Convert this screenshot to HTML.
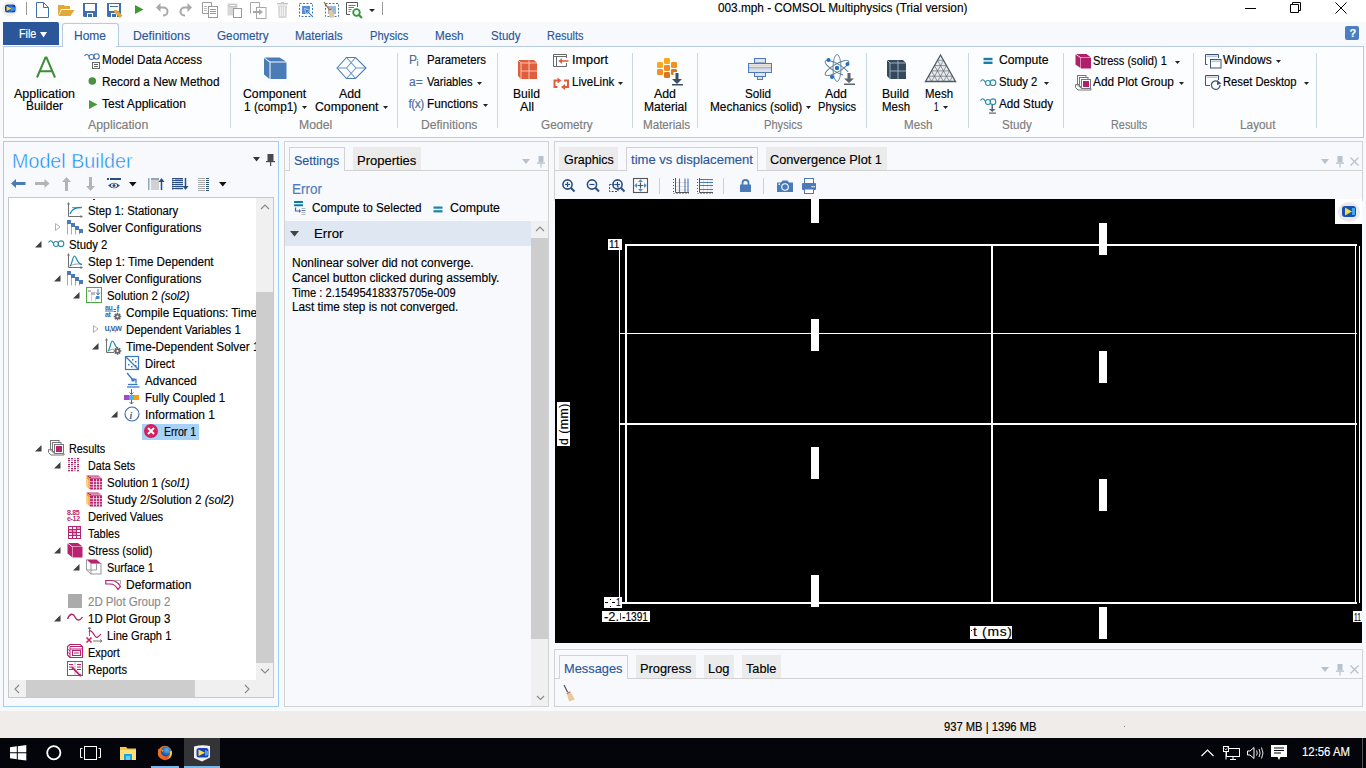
<!DOCTYPE html>
<html><head><meta charset="utf-8"><title>COMSOL</title>
<style>
html,body{margin:0;padding:0;}
body{width:1366px;height:768px;overflow:hidden;position:relative;background:#f8f9fc;font-family:"Liberation Sans",sans-serif;}
.t{position:absolute;white-space:nowrap;line-height:1;font-family:"Liberation Sans",sans-serif;-webkit-text-stroke-width:0.15px;}
svg{overflow:visible}
</style></head><body>
<div style="position:absolute;left:0px;top:0px;width:1366px;height:22px;background:#fff"></div>
<div class="t" style="left:718.00px;top:1.84px;font-size:12px;color:#000;transform:scaleX(0.9824);transform-origin:0 0;">003.mph - COMSOL Multiphysics (Trial version)</div>
<div style="position:absolute;left:0px;top:22px;width:1363px;height:24px;background:#f8f9fd"></div>
<div style="position:absolute;left:3px;top:22px;width:56px;height:23px;background:#2b579a;border-top-right-radius:2px"></div>
<div class="t" style="left:18.70px;top:28.04px;font-size:12px;color:#fff;transform:scaleX(0.8954);transform-origin:0 0;">File</div>
<svg style="position:absolute;left:40px;top:31.5px;" width="7" height="5.5" viewBox="0 0 7 5.5"><path d="M0 0H7L3.5 5.5Z" fill="#fff"/></svg>
<div style="position:absolute;left:62px;top:23px;width:55px;height:24px;background:#fcfdfe;border:1px solid #b9cbe0;border-bottom:none;border-radius:3px 3px 0 0"></div>
<div class="t" style="left:73.60px;top:29.54px;font-size:12px;color:#2b579a;transform:scaleX(0.9988);transform-origin:0 0;">Home</div>
<div class="t" style="left:133.00px;top:29.54px;font-size:12px;color:#2b579a;transform:scaleX(1.0171);transform-origin:0 0;">Definitions</div>
<div class="t" style="left:217.00px;top:29.54px;font-size:12px;color:#2b579a;transform:scaleX(0.9776);transform-origin:0 0;">Geometry</div>
<div class="t" style="left:295.00px;top:29.54px;font-size:12px;color:#2b579a;transform:scaleX(0.9782);transform-origin:0 0;">Materials</div>
<div class="t" style="left:369.50px;top:29.54px;font-size:12px;color:#2b579a;transform:scaleX(0.9265);transform-origin:0 0;">Physics</div>
<div class="t" style="left:435.00px;top:29.54px;font-size:12px;color:#2b579a;transform:scaleX(0.9714);transform-origin:0 0;">Mesh</div>
<div class="t" style="left:491.00px;top:29.54px;font-size:12px;color:#2b579a;transform:scaleX(0.9622);transform-origin:0 0;">Study</div>
<div class="t" style="left:547.00px;top:29.54px;font-size:12px;color:#2b579a;transform:scaleX(0.9120);transform-origin:0 0;">Results</div>
<div style="position:absolute;left:1345px;top:26px;width:14px;height:14px;background:#4a7fc0;border-radius:2px"></div>
<div class="t" style="left:1349.50px;top:27.87px;font-size:11px;color:#fff;font-weight:bold">?</div>
<div style="position:absolute;left:3px;top:46px;width:1359px;height:90px;background:#fcfdfe;border:1px solid #b9cbe0"></div>
<div style="position:absolute;left:63px;top:46px;width:53px;height:1px;background:#fcfdfe"></div>
<div style="position:absolute;left:230px;top:53px;width:1px;height:75px;background:#c9d6e4"></div>
<div style="position:absolute;left:397px;top:53px;width:1px;height:75px;background:#c9d6e4"></div>
<div style="position:absolute;left:497px;top:53px;width:1px;height:75px;background:#c9d6e4"></div>
<div style="position:absolute;left:632px;top:53px;width:1px;height:75px;background:#c9d6e4"></div>
<div style="position:absolute;left:697px;top:53px;width:1px;height:75px;background:#c9d6e4"></div>
<div style="position:absolute;left:866px;top:53px;width:1px;height:75px;background:#c9d6e4"></div>
<div style="position:absolute;left:968px;top:53px;width:1px;height:75px;background:#c9d6e4"></div>
<div style="position:absolute;left:1063px;top:53px;width:1px;height:75px;background:#c9d6e4"></div>
<div style="position:absolute;left:1193px;top:53px;width:1px;height:75px;background:#c9d6e4"></div>
<div style="position:absolute;left:1316px;top:53px;width:1px;height:75px;background:#c9d6e4"></div>
<div class="t" style="left:88.20px;top:118.54px;font-size:12px;color:#7c7c7c;transform:scaleX(1.0276);transform-origin:0 0;">Application</div>
<div class="t" style="left:298.50px;top:118.54px;font-size:12px;color:#7c7c7c;transform:scaleX(1.0153);transform-origin:0 0;">Model</div>
<div class="t" style="left:421.40px;top:118.54px;font-size:12px;color:#7c7c7c;transform:scaleX(1.0064);transform-origin:0 0;">Definitions</div>
<div class="t" style="left:541.20px;top:118.54px;font-size:12px;color:#7c7c7c;transform:scaleX(0.9814);transform-origin:0 0;">Geometry</div>
<div class="t" style="left:642.70px;top:118.54px;font-size:12px;color:#7c7c7c;transform:scaleX(0.9679);transform-origin:0 0;">Materials</div>
<div class="t" style="left:764.40px;top:118.54px;font-size:12px;color:#7c7c7c;transform:scaleX(0.9265);transform-origin:0 0;">Physics</div>
<div class="t" style="left:904.00px;top:118.54px;font-size:12px;color:#7c7c7c;transform:scaleX(0.9680);transform-origin:0 0;">Mesh</div>
<div class="t" style="left:1002.00px;top:118.54px;font-size:12px;color:#7c7c7c;transform:scaleX(0.9687);transform-origin:0 0;">Study</div>
<div class="t" style="left:1111.20px;top:118.54px;font-size:12px;color:#7c7c7c;transform:scaleX(0.9070);transform-origin:0 0;">Results</div>
<div class="t" style="left:1239.50px;top:118.54px;font-size:12px;color:#7c7c7c;transform:scaleX(0.9845);transform-origin:0 0;">Layout</div>
<div class="t" style="left:102.00px;top:53.74px;font-size:12px;color:#000;transform:scaleX(0.9735);transform-origin:0 0;">Model Data Access</div>
<div class="t" style="left:102.00px;top:75.74px;font-size:12px;color:#000;transform:scaleX(0.9841);transform-origin:0 0;">Record a New Method</div>
<div class="t" style="left:102.00px;top:97.74px;font-size:12px;color:#000;transform:scaleX(1.0072);transform-origin:0 0;">Test Application</div>
<div class="t" style="left:14.00px;top:87.64px;font-size:12px;color:#000;transform:scaleX(1.0395);transform-origin:0 0;">Application</div>
<div class="t" style="left:26.00px;top:100.34px;font-size:12px;color:#000;transform:scaleX(0.9898);transform-origin:0 0;">Builder</div>
<div class="t" style="left:242.50px;top:88.04px;font-size:12px;color:#000;transform:scaleX(1.0187);transform-origin:0 0;">Component</div>
<div class="t" style="left:244.20px;top:100.74px;font-size:12px;color:#000;transform:scaleX(0.9870);transform-origin:0 0;">1 (comp1)</div>
<svg style="position:absolute;left:302.0px;top:105.5px;" width="5" height="3" viewBox="0 0 5 3"><path d="M0 0H5L2.5 3Z" fill="#222"/></svg>
<div class="t" style="left:339.00px;top:88.04px;font-size:12px;color:#000;transform:scaleX(1.0300);transform-origin:0 0;">Add</div>
<div class="t" style="left:315.30px;top:100.74px;font-size:12px;color:#000;transform:scaleX(1.0235);transform-origin:0 0;">Component</div>
<svg style="position:absolute;left:382.5px;top:105.5px;" width="5" height="3" viewBox="0 0 5 3"><path d="M0 0H5L2.5 3Z" fill="#222"/></svg>
<div class="t" style="left:427.40px;top:54.04px;font-size:12px;color:#000;transform:scaleX(0.9510);transform-origin:0 0;">Parameters</div>
<div class="t" style="left:427.40px;top:76.04px;font-size:12px;color:#000;transform:scaleX(0.9259);transform-origin:0 0;">Variables</div>
<svg style="position:absolute;left:476.5px;top:81.5px;" width="5" height="3" viewBox="0 0 5 3"><path d="M0 0H5L2.5 3Z" fill="#222"/></svg>
<div class="t" style="left:427.40px;top:98.04px;font-size:12px;color:#000;transform:scaleX(0.9804);transform-origin:0 0;">Functions</div>
<svg style="position:absolute;left:482.5px;top:103.5px;" width="5" height="3" viewBox="0 0 5 3"><path d="M0 0H5L2.5 3Z" fill="#222"/></svg>
<div class="t" style="left:513.00px;top:88.04px;font-size:12px;color:#000;transform:scaleX(1.0112);transform-origin:0 0;">Build</div>
<div class="t" style="left:520.00px;top:100.74px;font-size:12px;color:#000;transform:scaleX(1.0511);transform-origin:0 0;">All</div>
<div class="t" style="left:571.50px;top:54.04px;font-size:12px;color:#000;transform:scaleX(1.0582);transform-origin:0 0;">Import</div>
<div class="t" style="left:571.60px;top:76.04px;font-size:12px;color:#000;transform:scaleX(0.9615);transform-origin:0 0;">LiveLink</div>
<svg style="position:absolute;left:617.5px;top:81.5px;" width="5" height="3" viewBox="0 0 5 3"><path d="M0 0H5L2.5 3Z" fill="#222"/></svg>
<div class="t" style="left:654.00px;top:88.04px;font-size:12px;color:#000;transform:scaleX(1.0300);transform-origin:0 0;">Add</div>
<div class="t" style="left:644.00px;top:100.74px;font-size:12px;color:#000;transform:scaleX(1.0080);transform-origin:0 0;">Material</div>
<div class="t" style="left:745.00px;top:88.04px;font-size:12px;color:#000;transform:scaleX(0.9738);transform-origin:0 0;">Solid</div>
<div class="t" style="left:709.50px;top:100.74px;font-size:12px;color:#000;transform:scaleX(0.9876);transform-origin:0 0;">Mechanics (solid)</div>
<svg style="position:absolute;left:806.0px;top:105.5px;" width="5" height="3" viewBox="0 0 5 3"><path d="M0 0H5L2.5 3Z" fill="#222"/></svg>
<div class="t" style="left:825.00px;top:88.04px;font-size:12px;color:#000;transform:scaleX(1.0300);transform-origin:0 0;">Add</div>
<div class="t" style="left:817.50px;top:100.74px;font-size:12px;color:#000;transform:scaleX(0.9216);transform-origin:0 0;">Physics</div>
<div class="t" style="left:882.00px;top:88.04px;font-size:12px;color:#000;transform:scaleX(1.0112);transform-origin:0 0;">Build</div>
<div class="t" style="left:882.00px;top:100.74px;font-size:12px;color:#000;transform:scaleX(0.9543);transform-origin:0 0;">Mesh</div>
<div class="t" style="left:925.00px;top:88.04px;font-size:12px;color:#000;transform:scaleX(0.9543);transform-origin:0 0;">Mesh</div>
<div class="t" style="left:933.80px;top:100.74px;font-size:12px;color:#000;transform:scaleX(0.6757);transform-origin:0 0;">1</div>
<svg style="position:absolute;left:942.5px;top:105.5px;" width="5" height="3" viewBox="0 0 5 3"><path d="M0 0H5L2.5 3Z" fill="#222"/></svg>
<div class="t" style="left:998.50px;top:54.04px;font-size:12px;color:#000;transform:scaleX(1.0160);transform-origin:0 0;">Compute</div>
<div class="t" style="left:998.50px;top:76.04px;font-size:12px;color:#000;transform:scaleX(0.9415);transform-origin:0 0;">Study 2</div>
<svg style="position:absolute;left:1043.5px;top:81.5px;" width="5" height="3" viewBox="0 0 5 3"><path d="M0 0H5L2.5 3Z" fill="#222"/></svg>
<div class="t" style="left:998.50px;top:98.04px;font-size:12px;color:#000;transform:scaleX(0.9769);transform-origin:0 0;">Add Study</div>
<div class="t" style="left:1093.20px;top:55.04px;font-size:12px;color:#000;transform:scaleX(0.9220);transform-origin:0 0;">Stress (solid) 1</div>
<svg style="position:absolute;left:1174.5px;top:60.5px;" width="5" height="3" viewBox="0 0 5 3"><path d="M0 0H5L2.5 3Z" fill="#222"/></svg>
<div class="t" style="left:1093.20px;top:76.04px;font-size:12px;color:#000;transform:scaleX(0.9844);transform-origin:0 0;">Add Plot Group</div>
<svg style="position:absolute;left:1179.0px;top:81.5px;" width="5" height="3" viewBox="0 0 5 3"><path d="M0 0H5L2.5 3Z" fill="#222"/></svg>
<div class="t" style="left:1223.30px;top:54.04px;font-size:12px;color:#000;transform:scaleX(1.0008);transform-origin:0 0;">Windows</div>
<svg style="position:absolute;left:1276.0px;top:59.5px;" width="5" height="3" viewBox="0 0 5 3"><path d="M0 0H5L2.5 3Z" fill="#222"/></svg>
<div class="t" style="left:1223.30px;top:76.34px;font-size:12px;color:#000;transform:scaleX(0.9350);transform-origin:0 0;">Reset Desktop</div>
<svg style="position:absolute;left:1304.0px;top:81.5px;" width="5" height="3" viewBox="0 0 5 3"><path d="M0 0H5L2.5 3Z" fill="#222"/></svg>
<div style="position:absolute;left:3px;top:141px;width:274px;height:564px;border:1px solid #9fd0f5"></div>
<div class="t" style="left:12.30px;top:150.37px;font-size:21px;color:#1089ec;transform:scaleX(0.9384);transform-origin:0 0;-webkit-text-stroke:0.5px #f8f9fc;">Model Builder</div>
<div style="position:absolute;left:8px;top:197px;width:264px;height:499px;background:#fff;border:1px solid #c8c8c8"></div>
<div style="position:absolute;left:256px;top:198px;width:17px;height:499px;background:#f0f0f0"></div>
<div style="position:absolute;left:256px;top:292px;width:17px;height:371px;background:#cdcdcd"></div>
<div style="position:absolute;left:9px;top:680px;width:247px;height:17px;background:#f0f0f0"></div>
<div style="position:absolute;left:26px;top:680px;width:169px;height:17px;background:#cdcdcd"></div>
<div style="position:absolute;left:9px;top:198px;width:247px;height:482px;overflow:hidden">
<div style="position:absolute;left:-9px;top:-198px;width:1366px;height:768px">
<div class="t" style="left:87.50px;top:204.54px;font-size:12px;color:#000;transform:scaleX(0.9465);transform-origin:0 0;">Step 1: Stationary</div>
<svg style="position:absolute;left:67px;top:202px;" width="16" height="16" viewBox="0 0 16 16"><g stroke="#707070" fill="none" stroke-width="1"><path d="M1.5 1V14.5H15"/></g><path d="M1.5 0L3 2.5H0Z M16 14.5L13.5 13V16Z" fill="#707070"/><path d="M5 5.5H15" stroke="#999"/><path d="M3 12C5 7 8 5.5 14.5 5.5" fill="none" stroke="#1a8ab0" stroke-width="1.3"/></svg>
<div class="t" style="left:87.50px;top:221.54px;font-size:12px;color:#000;transform:scaleX(0.9894);transform-origin:0 0;">Solver Configurations</div>
<svg style="position:absolute;left:55.0px;top:223.0px;" width="6" height="8" viewBox="0 0 6 8"><path d="M0.5 0.5L5 4L0.5 7.5Z" fill="none" stroke="#b0b0b0"/></svg>
<svg style="position:absolute;left:67px;top:219px;" width="16" height="16" viewBox="0 0 16 16"><rect x="0" y="1" width="4" height="4" fill="#4a7ab8"/><path d="M0.5 5V15.5" stroke="#aaa"/><rect x="4" y="4" width="4" height="4" fill="#4a7ab8"/><path d="M4.5 8V15.5" stroke="#aaa"/><rect x="8" y="7" width="4" height="4" fill="#4a7ab8"/><path d="M8.5 11V15.5" stroke="#aaa"/><rect x="12" y="10" width="4" height="4" fill="#4a7ab8"/><path d="M12.5 14V15.5" stroke="#aaa"/></svg>
<div class="t" style="left:68.50px;top:238.54px;font-size:12px;color:#000;transform:scaleX(0.9440);transform-origin:0 0;">Study 2</div>
<svg style="position:absolute;left:35.0px;top:241.0px;" width="7" height="7" viewBox="0 0 7 7"><path d="M6.5 0V6.5H0Z" fill="#404040"/></svg>
<svg style="position:absolute;left:48px;top:236px;" width="16" height="16" viewBox="0 0 16 16"><g fill="none" stroke="#2a8ca0" stroke-width="1.1"><path d="M0.5 6.5C2 4 3.5 4 5.5 7.5"/><circle cx="8" cy="8" r="2.5"/><circle cx="13" cy="7.7" r="2.8"/></g></svg>
<div class="t" style="left:87.50px;top:255.54px;font-size:12px;color:#000;transform:scaleX(0.9705);transform-origin:0 0;">Step 1: Time Dependent</div>
<svg style="position:absolute;left:67px;top:253px;" width="16" height="16" viewBox="0 0 16 16"><g stroke="#707070" fill="none" stroke-width="1"><path d="M1.5 1V14.5H15"/></g><path d="M1.5 0L3 2.5H0Z M16 14.5L13.5 13V16Z" fill="#707070"/><path d="M3 13C7 11 8 11 15 11" fill="none" stroke="#999"/><path d="M2.5 13C5 13 5.5 3 7.5 3C9.5 3 10 11.5 15 11.5" fill="none" stroke="#1a8ab0" stroke-width="1.2"/></svg>
<div class="t" style="left:87.50px;top:272.54px;font-size:12px;color:#000;transform:scaleX(0.9894);transform-origin:0 0;">Solver Configurations</div>
<svg style="position:absolute;left:54.0px;top:275.0px;" width="7" height="7" viewBox="0 0 7 7"><path d="M6.5 0V6.5H0Z" fill="#404040"/></svg>
<svg style="position:absolute;left:67px;top:270px;" width="16" height="16" viewBox="0 0 16 16"><rect x="0" y="1" width="4" height="4" fill="#4a7ab8"/><path d="M0.5 5V15.5" stroke="#aaa"/><rect x="4" y="4" width="4" height="4" fill="#4a7ab8"/><path d="M4.5 8V15.5" stroke="#aaa"/><rect x="8" y="7" width="4" height="4" fill="#4a7ab8"/><path d="M8.5 11V15.5" stroke="#aaa"/><rect x="12" y="10" width="4" height="4" fill="#4a7ab8"/><path d="M12.5 14V15.5" stroke="#aaa"/></svg>
<div class="t" style="left:106.50px;top:289.54px;font-size:12px;color:#000;transform:scaleX(0.9516);transform-origin:0 0;">Solution 2 <i>(sol2)</i></div>
<svg style="position:absolute;left:73.0px;top:292.0px;" width="7" height="7" viewBox="0 0 7 7"><path d="M6.5 0V6.5H0Z" fill="#404040"/></svg>
<svg style="position:absolute;left:86px;top:287px;" width="16" height="16" viewBox="0 0 16 16"><rect x="0.5" y="0.5" width="15" height="15" fill="#fff" stroke="#4aaa40"/><rect x="2" y="3" width="3" height="2" fill="#bbb"/><rect x="5" y="5" width="4" height="3" fill="#bbb"/><path d="M5.5 8V14M9.5 10V14" stroke="#ccc"/><rect x="10" y="9" width="3.5" height="3" fill="#4a8ac8"/><path d="M12 2V7" stroke="#3a7ac0"/><path d="M10 5.5L12 8L14 5.5" fill="none" stroke="#3a7ac0"/></svg>
<div class="t" style="left:125.50px;top:306.54px;font-size:12px;color:#000;transform:scaleX(0.9822);transform-origin:0 0;">Compile Equations: Time-Dependent</div>
<svg style="position:absolute;left:105px;top:304px;" width="16" height="16" viewBox="0 0 16 16"><text x="0" y="5.5" font-size="7" font-weight="bold" fill="#3a6aa8" font-family="Liberation Sans" letter-spacing="-0.3">au</text><path d="M0 7H8" stroke="#3a6aa8"/><text x="0" y="13" font-size="7" font-weight="bold" fill="#3a6aa8" font-family="Liberation Sans" letter-spacing="-0.3">at</text><path d="M8.5 5.5H11M8.5 7.5H11" stroke="#3a6aa8"/><text x="11.5" y="7.5" font-size="8.5" font-weight="bold" fill="#3a6aa8" font-family="Liberation Sans">f</text><circle cx="12.5" cy="12.5" r="2.6" fill="#666"/><circle cx="12.5" cy="12.5" r="1.04" fill="#fff"/><rect x="11.7" y="8.700000000000001" width="1.6" height="2" fill="#666" transform="rotate(0 12.5 12.5)"/><rect x="11.7" y="8.700000000000001" width="1.6" height="2" fill="#666" transform="rotate(45 12.5 12.5)"/><rect x="11.7" y="8.700000000000001" width="1.6" height="2" fill="#666" transform="rotate(90 12.5 12.5)"/><rect x="11.7" y="8.700000000000001" width="1.6" height="2" fill="#666" transform="rotate(135 12.5 12.5)"/><rect x="11.7" y="8.700000000000001" width="1.6" height="2" fill="#666" transform="rotate(180 12.5 12.5)"/><rect x="11.7" y="8.700000000000001" width="1.6" height="2" fill="#666" transform="rotate(225 12.5 12.5)"/><rect x="11.7" y="8.700000000000001" width="1.6" height="2" fill="#666" transform="rotate(270 12.5 12.5)"/><rect x="11.7" y="8.700000000000001" width="1.6" height="2" fill="#666" transform="rotate(315 12.5 12.5)"/></svg>
<div class="t" style="left:125.50px;top:323.54px;font-size:12px;color:#000;transform:scaleX(0.9464);transform-origin:0 0;">Dependent Variables 1</div>
<svg style="position:absolute;left:93.0px;top:325.0px;" width="6" height="8" viewBox="0 0 6 8"><path d="M0.5 0.5L5 4L0.5 7.5Z" fill="none" stroke="#b0b0b0"/></svg>
<svg style="position:absolute;left:105px;top:321px;" width="16" height="16" viewBox="0 0 16 16"><text x="-0.5" y="10" font-size="8.5" font-weight="bold" fill="#3a6aa8" font-family="Liberation Sans" letter-spacing="-0.8">u,v,w</text></svg>
<div class="t" style="left:125.50px;top:340.54px;font-size:12px;color:#000;transform:scaleX(0.9794);transform-origin:0 0;">Time-Dependent Solver 1</div>
<svg style="position:absolute;left:92.0px;top:343.0px;" width="7" height="7" viewBox="0 0 7 7"><path d="M6.5 0V6.5H0Z" fill="#404040"/></svg>
<svg style="position:absolute;left:105px;top:338px;" width="16" height="16" viewBox="0 0 16 16"><g stroke="#707070" fill="none" stroke-width="1"><path d="M1.5 1V14.5H15"/></g><path d="M1.5 0L3 2.5H0Z M16 14.5L13.5 13V16Z" fill="#707070"/><path d="M3 13C7 11 8 11 15 11" fill="none" stroke="#999"/><path d="M2.5 13C5 13 5.5 3 7.5 3C9.5 3 10 11.5 15 11.5" fill="none" stroke="#1a8ab0" stroke-width="1.2"/><rect x="9" y="10" width="7" height="7" fill="#fff"/><circle cx="12.5" cy="13" r="2.6" fill="#666"/><circle cx="12.5" cy="13" r="1.04" fill="#fff"/><rect x="11.7" y="9.200000000000001" width="1.6" height="2" fill="#666" transform="rotate(0 12.5 13)"/><rect x="11.7" y="9.200000000000001" width="1.6" height="2" fill="#666" transform="rotate(45 12.5 13)"/><rect x="11.7" y="9.200000000000001" width="1.6" height="2" fill="#666" transform="rotate(90 12.5 13)"/><rect x="11.7" y="9.200000000000001" width="1.6" height="2" fill="#666" transform="rotate(135 12.5 13)"/><rect x="11.7" y="9.200000000000001" width="1.6" height="2" fill="#666" transform="rotate(180 12.5 13)"/><rect x="11.7" y="9.200000000000001" width="1.6" height="2" fill="#666" transform="rotate(225 12.5 13)"/><rect x="11.7" y="9.200000000000001" width="1.6" height="2" fill="#666" transform="rotate(270 12.5 13)"/><rect x="11.7" y="9.200000000000001" width="1.6" height="2" fill="#666" transform="rotate(315 12.5 13)"/></svg>
<div class="t" style="left:144.50px;top:357.54px;font-size:12px;color:#000;transform:scaleX(0.9451);transform-origin:0 0;">Direct</div>
<svg style="position:absolute;left:124px;top:355px;" width="16" height="16" viewBox="0 0 16 16"><rect x="1.5" y="1.5" width="13" height="13" fill="#fff" stroke="#3a7ac0" stroke-width="1.2"/><path d="M2 2L14 14" stroke="#3a7ac0" stroke-width="1.2"/><rect x="8" y="4" width="1.5" height="1.5" fill="#3a7ac0"/><rect x="11" y="6" width="1.5" height="1.5" fill="#3a7ac0"/><rect x="4" y="9" width="1.5" height="1.5" fill="#3a7ac0"/><rect x="7" y="11" width="1.5" height="1.5" fill="#3a7ac0"/><rect x="11" y="10" width="1.5" height="1.5" fill="#3a7ac0"/></svg>
<div class="t" style="left:144.50px;top:374.54px;font-size:12px;color:#000;transform:scaleX(0.9663);transform-origin:0 0;">Advanced</div>
<svg style="position:absolute;left:124px;top:372px;" width="16" height="16" viewBox="0 0 16 16"><g fill="none" stroke="#3a7ac0" stroke-width="1.3"><path d="M3 1L9 8"/><path d="M8 7.5H12V11.5"/><path d="M4 12.5H13.5"/><path d="M3 15H15.5"/></g><rect x="7.5" y="6.5" width="3" height="3" fill="#3a7ac0"/></svg>
<div class="t" style="left:144.50px;top:391.54px;font-size:12px;color:#000;transform:scaleX(0.9604);transform-origin:0 0;">Fully Coupled 1</div>
<svg style="position:absolute;left:124px;top:389px;" width="16" height="16" viewBox="0 0 16 16"><rect x="0" y="6" width="5" height="5" fill="#a048c8"/><rect x="5" y="6" width="5" height="5" fill="#48b8e8"/><rect x="10" y="6" width="5" height="5" fill="#f8a010"/><path d="M7.5 0V5M7.5 11V15" stroke="#666"/><path d="M5.5 3.5L7.5 5.5L9.5 3.5M5.5 13L7.5 15L9.5 13" fill="none" stroke="#666"/></svg>
<div class="t" style="left:144.50px;top:408.54px;font-size:12px;color:#000;transform:scaleX(0.9997);transform-origin:0 0;">Information 1</div>
<svg style="position:absolute;left:111.0px;top:411.0px;" width="7" height="7" viewBox="0 0 7 7"><path d="M6.5 0V6.5H0Z" fill="#404040"/></svg>
<svg style="position:absolute;left:124px;top:406px;" width="16" height="16" viewBox="0 0 16 16"><circle cx="8" cy="8" r="7" fill="#fff" stroke="#3a6aa8" stroke-width="1.1"/><text x="5.5" y="12.5" font-size="10" font-style="italic" font-family="Liberation Serif" fill="#3a6aa8" font-weight="bold">i</text></svg>
<div style="position:absolute;left:142px;top:423.5px;width:57px;height:16px;background:#a6d2f7"></div>
<div class="t" style="left:163.50px;top:425.54px;font-size:12px;color:#000;transform:scaleX(0.8756);transform-origin:0 0;">Error 1</div>
<svg style="position:absolute;left:143px;top:423px;" width="16" height="16" viewBox="0 0 16 16"><circle cx="8" cy="8" r="7" fill="#d81e5b"/><path d="M5 5L11 11M11 5L5 11" stroke="#fff" stroke-width="2"/></svg>
<div class="t" style="left:68.50px;top:442.54px;font-size:12px;color:#000;transform:scaleX(0.9045);transform-origin:0 0;">Results</div>
<svg style="position:absolute;left:35.0px;top:445.0px;" width="7" height="7" viewBox="0 0 7 7"><path d="M6.5 0V6.5H0Z" fill="#404040"/></svg>
<svg style="position:absolute;left:48px;top:440px;" width="16" height="16" viewBox="0 0 16 16"><g fill="#fff" stroke="#777"><rect x="2.5" y="0.5" width="8.5" height="9"/><rect x="4.5" y="2.5" width="8.5" height="9"/><rect x="6.5" y="4.5" width="9" height="9"/><path d="M0.5 9.5V12.5L3 15H16V13.5H6.5L2.5 10Z"/></g><rect x="8" y="6" width="6" height="6" fill="#b8226e"/></svg>
<div class="t" style="left:87.50px;top:459.54px;font-size:12px;color:#000;transform:scaleX(0.8922);transform-origin:0 0;">Data Sets</div>
<svg style="position:absolute;left:54.0px;top:462.0px;" width="7" height="7" viewBox="0 0 7 7"><path d="M6.5 0V6.5H0Z" fill="#404040"/></svg>
<svg style="position:absolute;left:67px;top:457px;" width="16" height="16" viewBox="0 0 16 16"><rect x="1" y="1" width="2" height="1.3" fill="#b8226e"/><rect x="1" y="3" width="2" height="1.3" fill="#b8226e"/><rect x="1" y="5" width="2" height="1.3" fill="#aab"/><rect x="1" y="7" width="2" height="1.3" fill="#b8226e"/><rect x="1" y="9" width="2" height="1.3" fill="#b8226e"/><rect x="1" y="11" width="2" height="1.3" fill="#aab"/><rect x="1" y="13" width="2" height="1.3" fill="#b8226e"/><rect x="4" y="1" width="2" height="1.3" fill="#b8226e"/><rect x="4" y="3" width="2" height="1.3" fill="#aab"/><rect x="4" y="5" width="2" height="1.3" fill="#b8226e"/><rect x="4" y="7" width="2" height="1.3" fill="#b8226e"/><rect x="4" y="9" width="2" height="1.3" fill="#aab"/><rect x="4" y="11" width="2" height="1.3" fill="#b8226e"/><rect x="4" y="13" width="2" height="1.3" fill="#b8226e"/><rect x="7" y="1" width="2" height="1.3" fill="#aab"/><rect x="7" y="3" width="2" height="1.3" fill="#b8226e"/><rect x="7" y="5" width="2" height="1.3" fill="#b8226e"/><rect x="7" y="7" width="2" height="1.3" fill="#aab"/><rect x="7" y="9" width="2" height="1.3" fill="#b8226e"/><rect x="7" y="11" width="2" height="1.3" fill="#b8226e"/><rect x="7" y="13" width="2" height="1.3" fill="#aab"/><rect x="10" y="1" width="2" height="1.3" fill="#b8226e"/><rect x="10" y="3" width="2" height="1.3" fill="#b8226e"/><rect x="10" y="5" width="2" height="1.3" fill="#aab"/><rect x="10" y="7" width="2" height="1.3" fill="#b8226e"/><rect x="10" y="9" width="2" height="1.3" fill="#b8226e"/><rect x="10" y="11" width="2" height="1.3" fill="#aab"/><rect x="10" y="13" width="2" height="1.3" fill="#b8226e"/></svg>
<div class="t" style="left:106.50px;top:476.54px;font-size:12px;color:#000;transform:scaleX(0.9527);transform-origin:0 0;">Solution 1 <i>(sol1)</i></div>
<svg style="position:absolute;left:86px;top:474px;" width="16" height="16" viewBox="0 0 16 16"><path d="M0.5 1.5L4 4.5V15.5L0.5 12.5Z" fill="#f8a020"/><path d="M0.5 1.5H12.5L16 4.5H4Z" fill="#b8226e"/><rect x="4" y="4.5" width="12" height="11" fill="#b8226e"/><path d="M7.5 5V15.5" stroke="#fff" stroke-width="0.7"/><path d="M4 7.7H16" stroke="#fff" stroke-width="0.7"/><path d="M10.5 5V15.5" stroke="#fff" stroke-width="0.7"/><path d="M4 10.4H16" stroke="#fff" stroke-width="0.7"/><path d="M13.5 5V15.5" stroke="#fff" stroke-width="0.7"/><path d="M4 13.1H16" stroke="#fff" stroke-width="0.7"/><path d="M1.5 5V13M3 6V14" stroke="#fff" stroke-width="0.5"/><path d="M3 2.3H14M5 3.5H15" stroke="#fff" stroke-width="0.5"/></svg>
<div class="t" style="left:106.50px;top:493.54px;font-size:12px;color:#000;transform:scaleX(0.9699);transform-origin:0 0;">Study 2/Solution 2 <i>(sol2)</i></div>
<svg style="position:absolute;left:86px;top:491px;" width="16" height="16" viewBox="0 0 16 16"><path d="M0.5 1.5L4 4.5V15.5L0.5 12.5Z" fill="#f8a020"/><path d="M0.5 1.5H12.5L16 4.5H4Z" fill="#b8226e"/><rect x="4" y="4.5" width="12" height="11" fill="#b8226e"/><path d="M7.5 5V15.5" stroke="#fff" stroke-width="0.7"/><path d="M4 7.7H16" stroke="#fff" stroke-width="0.7"/><path d="M10.5 5V15.5" stroke="#fff" stroke-width="0.7"/><path d="M4 10.4H16" stroke="#fff" stroke-width="0.7"/><path d="M13.5 5V15.5" stroke="#fff" stroke-width="0.7"/><path d="M4 13.1H16" stroke="#fff" stroke-width="0.7"/><path d="M1.5 5V13M3 6V14" stroke="#fff" stroke-width="0.5"/><path d="M3 2.3H14M5 3.5H15" stroke="#fff" stroke-width="0.5"/></svg>
<div class="t" style="left:87.50px;top:510.54px;font-size:12px;color:#000;transform:scaleX(0.9346);transform-origin:0 0;">Derived Values</div>
<svg style="position:absolute;left:67px;top:508px;" width="16" height="16" viewBox="0 0 16 16"><text x="0" y="6.5" font-size="7" font-weight="bold" fill="#b8226e" font-family="Liberation Sans" letter-spacing="-0.3">8.85</text><text x="0" y="13" font-size="7" font-weight="bold" fill="#b8226e" font-family="Liberation Sans" letter-spacing="-0.3">e-12</text></svg>
<div class="t" style="left:87.50px;top:527.54px;font-size:12px;color:#000;transform:scaleX(0.9141);transform-origin:0 0;">Tables</div>
<svg style="position:absolute;left:67px;top:525px;" width="16" height="16" viewBox="0 0 16 16"><rect x="1" y="1" width="13" height="13" fill="#b8226e"/><rect x="2" y="2" width="3" height="2" fill="#fff"/><rect x="2" y="5" width="3" height="2" fill="#d8a0b8"/><rect x="2" y="8" width="3" height="2" fill="#fff"/><rect x="2" y="11" width="3" height="2" fill="#fff"/><rect x="6" y="2" width="3" height="2" fill="#fff"/><rect x="6" y="5" width="3" height="2" fill="#d8a0b8"/><rect x="6" y="8" width="3" height="2" fill="#d8a0b8"/><rect x="6" y="11" width="3" height="2" fill="#fff"/><rect x="10" y="2" width="3" height="2" fill="#d8a0b8"/><rect x="10" y="5" width="3" height="2" fill="#fff"/><rect x="10" y="8" width="3" height="2" fill="#fff"/><rect x="10" y="11" width="3" height="2" fill="#fff"/></svg>
<div class="t" style="left:87.50px;top:544.54px;font-size:12px;color:#000;transform:scaleX(0.9197);transform-origin:0 0;">Stress (solid)</div>
<svg style="position:absolute;left:54.0px;top:547.0px;" width="7" height="7" viewBox="0 0 7 7"><path d="M6.5 0V6.5H0Z" fill="#404040"/></svg>
<svg style="position:absolute;left:67px;top:542px;" width="16" height="16" viewBox="0 0 16 16"><path d="M0.5 1.5L5 5V15L0.5 11.5Z" fill="#b8226e"/><path d="M1 1H11L15.5 4.5H5.5Z" fill="#b8226e"/><rect x="5.5" y="5" width="10" height="10.5" fill="#b8226e"/></svg>
<div class="t" style="left:106.50px;top:561.54px;font-size:12px;color:#000;transform:scaleX(0.9093);transform-origin:0 0;">Surface 1</div>
<svg style="position:absolute;left:73.0px;top:564.0px;" width="7" height="7" viewBox="0 0 7 7"><path d="M6.5 0V6.5H0Z" fill="#404040"/></svg>
<svg style="position:absolute;left:86px;top:559px;" width="16" height="16" viewBox="0 0 16 16"><path d="M0.5 0.5H10.5L15 4.5H5Z" fill="#b8226e"/><g fill="none" stroke="#999"><rect x="5" y="4.5" width="10" height="10.5"/><path d="M0.5 0.5V11L5 15M0.5 11H10.5V4.5"/></g></svg>
<div class="t" style="left:125.50px;top:578.54px;font-size:12px;color:#000;transform:scaleX(1.0009);transform-origin:0 0;">Deformation</div>
<svg style="position:absolute;left:105px;top:576px;" width="16" height="16" viewBox="0 0 16 16"><rect x="6" y="4.5" width="9.5" height="3.5" fill="none" stroke="#b0b0b0"/><path d="M0.8 4.5H6.5C10 4.5 13 6.5 15.5 10.5L13 13.5C11 10 8.5 8 5.5 8H0.8Z" fill="#fff" stroke="#b8226e" stroke-width="1.2"/></svg>
<div class="t" style="left:87.50px;top:595.54px;font-size:12px;color:#8a8a8a;transform:scaleX(0.9565);transform-origin:0 0;">2D Plot Group 2</div>
<svg style="position:absolute;left:67px;top:593px;" width="16" height="16" viewBox="0 0 16 16"><rect x="1" y="1" width="14" height="14" fill="#ababab"/></svg>
<div class="t" style="left:87.50px;top:612.54px;font-size:12px;color:#000;transform:scaleX(0.9565);transform-origin:0 0;">1D Plot Group 3</div>
<svg style="position:absolute;left:54.0px;top:615.0px;" width="7" height="7" viewBox="0 0 7 7"><path d="M6.5 0V6.5H0Z" fill="#404040"/></svg>
<svg style="position:absolute;left:67px;top:610px;" width="16" height="16" viewBox="0 0 16 16"><path d="M0.5 9C3 3 6 3 8 7C10 11 13 11 15.5 7" fill="none" stroke="#b8226e" stroke-width="1.4"/></svg>
<div class="t" style="left:106.50px;top:629.54px;font-size:12px;color:#000;transform:scaleX(0.9270);transform-origin:0 0;">Line Graph 1</div>
<svg style="position:absolute;left:86px;top:627px;" width="16" height="16" viewBox="0 0 16 16"><path d="M3.5 0V9M3.5 0L2 2M3.5 0L5 2" stroke="#777" fill="none"/><path d="M7 14H16M16 14L14 12.5M16 14L14 15.5" stroke="#777" fill="none"/><path d="M3 5C5 2 7 6 9 9C11 12 13 9 15 7" fill="none" stroke="#b8226e" stroke-width="1.2"/><path d="M0.5 10.5L5.5 15.5M5.5 10.5L0.5 15.5" stroke="#d81e5b" stroke-width="1.6"/></svg>
<div class="t" style="left:87.50px;top:646.54px;font-size:12px;color:#000;transform:scaleX(0.9141);transform-origin:0 0;">Export</div>
<svg style="position:absolute;left:67px;top:644px;" width="16" height="16" viewBox="0 0 16 16"><path d="M0.5 2.5L3 0.5H13L15.5 2.5V13.5H3L0.5 11Z" fill="#fff" stroke="#b8226e" stroke-width="1.2"/><path d="M3 2.5H15.5M3 2.5V13.5M3 5H15.5" stroke="#b8226e" stroke-width="1"/><rect x="5.5" y="6.5" width="8" height="5" fill="none" stroke="#b8226e"/><path d="M7 9H12" stroke="#b8226e"/><path d="M0.5 5L3 7M0.5 8L3 10" stroke="#b8226e" stroke-width="0.8"/></svg>
<div class="t" style="left:87.50px;top:663.54px;font-size:12px;color:#000;transform:scaleX(0.9286);transform-origin:0 0;">Reports</div>
<svg style="position:absolute;left:67px;top:661px;" width="16" height="16" viewBox="0 0 16 16"><rect x="0.5" y="0.5" width="15" height="14" fill="#fff" stroke="#666"/><path d="M8 1V14" stroke="#bbb"/><path d="M2 3.5H6M2 6H5M2 8.5H6M10 3.5H14M10 6H14M10 8.5H14" stroke="#b8226e"/><path d="M5 6L14 15" stroke="#b8226e" stroke-width="2.2"/><path d="M7 6.5L13 13" stroke="#fff" stroke-width="0.6"/></svg>
</div></div>
<div style="position:absolute;left:284px;top:141px;width:264px;height:565px;background:#f8f9fc;border:1px solid #d2d2d2;box-sizing:border-box;width:265px;height:566px"></div>
<div style="position:absolute;left:285px;top:170px;width:263px;height:1px;background:#d2d2d2"></div>
<div style="position:absolute;left:289px;top:147px;width:56px;height:24px;background:#f8f9fc;border:1px solid #d2d2d2;border-bottom:none;box-sizing:border-box"></div>
<div style="position:absolute;left:353px;top:147px;width:68px;height:23px;background:#ebebeb"></div>
<div class="t" style="left:294.30px;top:154.21px;font-size:13px;color:#2b579a;transform:scaleX(0.9618);transform-origin:0 0;">Settings</div>
<div class="t" style="left:357.40px;top:154.21px;font-size:13px;color:#000;transform:scaleX(1.0020);transform-origin:0 0;">Properties</div>
<div class="t" style="left:291.70px;top:182.08px;font-size:14px;color:#4e7cb8;transform:scaleX(0.9685);transform-origin:0 0;">Error</div>
<div class="t" style="left:311.50px;top:201.64px;font-size:12px;color:#000;transform:scaleX(0.9779);transform-origin:0 0;">Compute to Selected</div>
<div class="t" style="left:450.00px;top:201.54px;font-size:12px;color:#000;transform:scaleX(1.0263);transform-origin:0 0;">Compute</div>
<div style="position:absolute;left:285px;top:221px;width:246px;height:25px;background:#dfe8f2"></div>
<svg style="position:absolute;left:290px;top:231px;" width="9" height="6" viewBox="0 0 9 6"><path d="M0 0H9L4.5 5.5Z" fill="#444"/></svg>
<div class="t" style="left:314.40px;top:227.01px;font-size:13px;color:#000;transform:scaleX(1.0187);transform-origin:0 0;">Error</div>
<div style="position:absolute;left:531px;top:221px;width:17px;height:485px;background:#f0f0f0"></div>
<div style="position:absolute;left:531px;top:238px;width:17px;height:401px;background:#cdcdcd"></div>
<div class="t" style="left:292.30px;top:256.84px;font-size:12px;color:#000;transform:scaleX(0.9973);transform-origin:0 0;">Nonlinear solver did not converge.</div>
<div class="t" style="left:292.30px;top:271.84px;font-size:12px;color:#000;transform:scaleX(1.0008);transform-origin:0 0;">Cancel button clicked during assembly.</div>
<div class="t" style="left:292.30px;top:286.84px;font-size:12px;color:#000;transform:scaleX(0.9240);transform-origin:0 0;">Time : 2.154954183375705e-009</div>
<div class="t" style="left:292.30px;top:301.34px;font-size:12px;color:#000;transform:scaleX(0.9821);transform-origin:0 0;">Last time step is not converged.</div>
<div style="position:absolute;left:554px;top:141px;width:809px;height:60px;border:1px solid #d2d2d2;border-bottom:none;box-sizing:border-box;width:809px;height:60px"></div>
<div style="position:absolute;left:555px;top:170px;width:807px;height:1px;background:#d2d2d2"></div>
<div style="position:absolute;left:559px;top:147px;width:59px;height:23px;background:#ebebeb"></div>
<div style="position:absolute;left:626px;top:147px;width:132px;height:24px;background:#f8f9fc;border:1px solid #d2d2d2;border-bottom:none;box-sizing:border-box"></div>
<div style="position:absolute;left:766px;top:147px;width:121px;height:23px;background:#ebebeb"></div>
<div class="t" style="left:563.70px;top:152.81px;font-size:13px;color:#000;transform:scaleX(0.9577);transform-origin:0 0;">Graphics</div>
<div class="t" style="left:630.70px;top:152.81px;font-size:13px;color:#2b579a;transform:scaleX(1.0045);transform-origin:0 0;">time vs displacement</div>
<div class="t" style="left:770.40px;top:152.91px;font-size:13px;color:#000;transform:scaleX(0.9798);transform-origin:0 0;">Convergence Plot 1</div>
<div style="position:absolute;left:555px;top:199px;width:807px;height:444px;background:#000"></div>
<div style="position:absolute;left:811px;top:199px;width:8px;height:24px;background:#fff"></div>
<div style="position:absolute;left:811px;top:319px;width:8px;height:32px;background:#fff"></div>
<div style="position:absolute;left:811px;top:447px;width:8px;height:32px;background:#fff"></div>
<div style="position:absolute;left:811px;top:575px;width:8px;height:32px;background:#fff"></div>
<div style="position:absolute;left:1099px;top:223px;width:8px;height:32px;background:#fff"></div>
<div style="position:absolute;left:1099px;top:351px;width:8px;height:32px;background:#fff"></div>
<div style="position:absolute;left:1099px;top:479px;width:8px;height:32px;background:#fff"></div>
<div style="position:absolute;left:1099px;top:607px;width:8px;height:32px;background:#fff"></div>
<div style="position:absolute;left:626px;top:244px;width:731px;height:2px;background:#fff"></div>
<div style="position:absolute;left:622px;top:602px;width:735px;height:2px;background:#fff"></div>
<div style="position:absolute;left:625px;top:244px;width:2px;height:360px;background:#fff"></div>
<div style="position:absolute;left:619px;top:250px;width:1px;height:352px;background:#fff"></div>
<div style="position:absolute;left:619px;top:333px;width:738px;height:1px;background:#fff"></div>
<div style="position:absolute;left:619px;top:423px;width:738px;height:2px;background:#fff"></div>
<div style="position:absolute;left:991px;top:245px;width:2px;height:358px;background:#fff"></div>
<div style="position:absolute;left:1355px;top:246px;width:1px;height:357px;background:#fff"></div>
<div style="position:absolute;left:1359px;top:246px;width:1px;height:357px;background:#fff"></div>
<div style="position:absolute;left:608px;top:239px;width:14px;height:11px;background:#fff"></div>
<div class="t" style="left:609.00px;top:239.37px;font-size:11px;color:#000;transform:scaleX(0.9091);transform-origin:0 0;font-family:"Liberation Mono";">11</div>
<div style="position:absolute;left:604px;top:597px;width:18px;height:11px;background:#fff"></div>
<div style="position:absolute;left:605px;top:602px;width:3px;height:1.3px;background:#000"></div>
<div style="position:absolute;left:612px;top:602px;width:3px;height:1.3px;background:#000"></div>
<div style="position:absolute;left:609.5px;top:598.5px;width:1.5px;height:1.3px;background:#000"></div>
<div style="position:absolute;left:609.5px;top:605.5px;width:1.5px;height:1.3px;background:#000"></div>
<div class="t" style="left:616.00px;top:597.37px;font-size:11px;color:#000;transform:scaleX(0.7576);transform-origin:0 0;font-family:"Liberation Mono";">1</div>
<div style="position:absolute;left:602px;top:611px;width:48px;height:11px;background:#fff"></div>
<div class="t" style="left:603.50px;top:610.84px;font-size:12px;color:#000;transform:scaleX(1.0730);transform-origin:0 0;">-2.</div>
<div style="position:absolute;left:620px;top:613px;width:1px;height:7px;background:#555"></div>
<div class="t" style="left:622.00px;top:610.84px;font-size:12px;color:#000;transform:scaleX(0.8464);transform-origin:0 0;">-1391</div>
<div style="position:absolute;left:970px;top:626px;width:42px;height:13px;background:#fff"></div>
<div style="position:absolute;left:971px;top:630px;width:1px;height:1px;background:#000"></div>
<div class="t" style="left:973.00px;top:626.33px;font-size:12.5px;color:#000;transform:scaleX(1.1147);transform-origin:0 0;letter-spacing:0.6px">t (ms)</div>
<div style="position:absolute;left:1010px;top:629px;width:1.2px;height:7px;background:#333"></div>
<div style="position:absolute;left:1353px;top:611px;width:9px;height:11px;background:#fff"></div>
<div class="t" style="left:1354.00px;top:611.67px;font-size:11px;color:#000;transform:scaleX(0.6061);transform-origin:0 0;font-family:"Liberation Mono";">11</div>
<div style="position:absolute;left:557px;top:402px;width:13px;height:44px;background:#fff"></div>
<div class="t" style="left:557.60px;top:444.60px;font-size:12.5px;color:#000;letter-spacing:0.5px;transform-origin:0 0;transform:rotate(-90deg) scaleX(0.9826)">d (mm)</div>
<div style="position:absolute;left:1335px;top:199px;width:27px;height:25px;background:#fff"></div>
<div style="position:absolute;left:554px;top:649px;width:809px;height:58px;border:1px solid #d2d2d2;box-sizing:border-box;width:809px;height:58px"></div>
<div style="position:absolute;left:555px;top:678px;width:807px;height:1px;background:#d2d2d2"></div>
<div style="position:absolute;left:559px;top:655px;width:69px;height:24px;background:#f8f9fc;border:1px solid #d2d2d2;border-bottom:none;box-sizing:border-box"></div>
<div style="position:absolute;left:636px;top:655px;width:60px;height:23px;background:#ebebeb"></div>
<div style="position:absolute;left:704px;top:655px;width:30px;height:23px;background:#ebebeb"></div>
<div style="position:absolute;left:742px;top:655px;width:39px;height:23px;background:#ebebeb"></div>
<div class="t" style="left:564.30px;top:662.21px;font-size:13px;color:#2b579a;transform:scaleX(0.9868);transform-origin:0 0;">Messages</div>
<div class="t" style="left:640.20px;top:662.21px;font-size:13px;color:#000;transform:scaleX(0.9865);transform-origin:0 0;">Progress</div>
<div class="t" style="left:708.30px;top:662.21px;font-size:13px;color:#000;transform:scaleX(0.9857);transform-origin:0 0;">Log</div>
<div class="t" style="left:746.20px;top:662.21px;font-size:13px;color:#000;transform:scaleX(0.9784);transform-origin:0 0;">Table</div>
<div style="position:absolute;left:0px;top:711px;width:1366px;height:27px;background:#f0ecea"></div>
<div class="t" style="left:943.80px;top:720.64px;font-size:12px;color:#000;transform:scaleX(0.9326);transform-origin:0 0;">937 MB | 1396 MB</div>
<div style="position:absolute;left:0px;top:738px;width:1366px;height:30px;background:#03050a"></div>
<div style="position:absolute;left:184px;top:738px;width:36px;height:30px;background:#333438"></div>
<div style="position:absolute;left:151px;top:766px;width:28px;height:2px;background:#76b9ed"></div>
<div style="position:absolute;left:184px;top:766px;width:36px;height:2px;background:#76b9ed"></div>
<svg style="position:absolute;left:1px;top:1px;" width="17" height="16" viewBox="0 0 17 16"><defs><linearGradient id="lgb" x1="0" y1="0" x2="1" y2="0"><stop offset="0" stop-color="#0a2a90"/><stop offset="0.5" stop-color="#2a70e0"/><stop offset="1" stop-color="#0a2a90"/></linearGradient></defs><ellipse cx="8.5" cy="8" rx="8" ry="7.5" fill="#efeff1"/><rect x="4" y="3.5" width="10.5" height="8" rx="2.5" fill="url(#lgb)"/><path d="M5.5 5L10.5 7.5L5.5 10Z" fill="#f0e040"/><path d="M10 5.5L14 6.5V9.5L10 10Z" fill="#40a0f0" opacity="0.8"/></svg>
<div style="position:absolute;left:26px;top:2px;width:1px;height:13px;background:#999"></div>
<svg style="position:absolute;left:36px;top:2px;" width="13" height="16" viewBox="0 0 13 16"><path d="M0.5 0.5H7.5L12.5 5.5V15.5H0.5Z" fill="#fff" stroke="#3f6fb0"/><path d="M7.5 0.5V5.5H12.5" fill="none" stroke="#3f6fb0"/></svg>
<svg style="position:absolute;left:58px;top:5px;" width="17" height="12" viewBox="0 0 17 12"><path d="M0 0H6L7 1H12V4H3L0 11Z" fill="#e2a83a"/><path d="M3.5 5H16.5L12.5 11H0.5Z" fill="#e2a83a"/></svg>
<svg style="position:absolute;left:83px;top:3px;" width="15" height="15" viewBox="0 0 15 15"><path d="M0 0H14V14H1L0 13Z" fill="#3f6fb0"/><rect x="2" y="1" width="10" height="7" fill="#fff"/><rect x="4" y="10" width="6" height="4" fill="#fff"/><rect x="5" y="11" width="4" height="3" fill="#3f6fb0"/></svg>
<svg style="position:absolute;left:107px;top:3px;" width="16" height="16" viewBox="0 0 16 16"><path d="M0 0H14V14H1L0 13Z" fill="#3f6fb0"/><rect x="2" y="1" width="10" height="7" fill="#fff"/><rect x="3" y="3" width="8" height="1" fill="#3f6fb0"/><rect x="4" y="10" width="6" height="4" fill="#fff"/><rect x="5" y="11" width="4" height="3" fill="#3f6fb0"/><path d="M7 7L10 7L15.5 12.5L13 15L7.5 9.5Z" fill="#e2a83a"/></svg>
<svg style="position:absolute;left:135px;top:5px;" width="9" height="9" viewBox="0 0 9 9"><path d="M0 0L8.5 4.5L0 9Z" fill="#3d9a2e"/></svg>
<svg style="position:absolute;left:156px;top:3px;" width="14" height="14" viewBox="0 0 14 14"><path d="M0 4.5L4.5 0V9Z" fill="#a8a8a8"/><path d="M4 4.5H7.5A4 4 0 0 1 7.5 12.5H7" fill="none" stroke="#a8a8a8" stroke-width="2"/></svg>
<svg style="position:absolute;left:179px;top:3px;" width="14" height="14" viewBox="0 0 14 14"><path d="M13 4.5L8.5 0V9Z" fill="#a8a8a8"/><path d="M9 4.5H5.5A4 4 0 0 0 5.5 12.5H6" fill="none" stroke="#a8a8a8" stroke-width="2"/></svg>
<svg style="position:absolute;left:202px;top:2px;" width="17" height="17" viewBox="0 0 17 17"><path d="M0.5 0.5H9.5V4M6 11.5H0.5V0.5" fill="none" stroke="#9a9a9a"/><rect x="6.5" y="4.5" width="9" height="11" fill="#fff" stroke="#9a9a9a"/><path d="M2 4.5H5M2 6.5H5M2 8.5H5" stroke="#bbb"/><path d="M8 7.5H14M8 9.5H14M8 11.5H14" stroke="#9a9a9a"/></svg>
<svg style="position:absolute;left:227px;top:2px;" width="16" height="17" viewBox="0 0 16 17"><path d="M0.5 1.5H10.5V6H6.5V13.5H0.5Z" fill="#d8d8d8"/><path d="M2.5 2.5H8.5L9 3V4.5H2V3Z" fill="#fff" stroke="#b0b0b0" stroke-width="0.8"/><rect x="6.5" y="6.5" width="8" height="9" fill="#fff" stroke="#9a9a9a"/></svg>
<svg style="position:absolute;left:250px;top:2px;" width="17" height="17" viewBox="0 0 17 17"><path d="M0.5 11.5V0.5H9.5V5" fill="none" stroke="#a8a8a8"/><rect x="6.5" y="5.5" width="9.5" height="11" fill="#fff" stroke="#a8a8a8"/><path d="M3 10H10" stroke="#a8a8a8" stroke-width="2"/><path d="M9 7L13 10L9 13Z" fill="#a8a8a8"/></svg>
<svg style="position:absolute;left:277px;top:2px;" width="11" height="16" viewBox="0 0 11 16"><rect x="0" y="1" width="11" height="1.5" fill="#c8c8c8"/><rect x="4" y="0" width="3" height="1" fill="#c8c8c8"/><path d="M1 3.5H10L9.5 16H1.5Z" fill="#d8d8d8"/><path d="M3.5 5V14M5.5 5V14M7.5 5V14" stroke="#f2f2f2"/></svg>
<svg style="position:absolute;left:299px;top:3px;" width="16" height="15" viewBox="0 0 16 15"><rect x="0.5" y="0.5" width="13" height="13" fill="none" stroke="#3a78c0" stroke-dasharray="2 1.5"/><rect x="3" y="3" width="8" height="8" fill="#5a8ed0"/><path d="M5.5 5.5L11.5 7.5L9.5 8.5L14.5 13.5L13.5 14.5L8.5 9.5L7.5 11.5Z" fill="#3a78c0" stroke="#fff" stroke-width="0.6"/></svg>
<svg style="position:absolute;left:323px;top:2px;" width="16" height="16" viewBox="0 0 16 16"><rect x="2.5" y="1.5" width="13" height="13" fill="none" stroke="#3a78c0" stroke-dasharray="2 1.5"/><rect x="5" y="4" width="8" height="8" fill="#9ab8e0"/><path d="M1 0L6.5 8" stroke="#8a6a40" stroke-width="1.3"/><path d="M5 7L8.5 6L12 15L7 16Z" fill="#e0c8a0"/><path d="M5.3 8L8.7 7" stroke="#d04040" stroke-width="1.1"/></svg>
<svg style="position:absolute;left:346px;top:2px;" width="17" height="17" viewBox="0 0 17 17"><path d="M4 12.5H0.5V0.5H11.5V5" fill="none" stroke="#555"/><path d="M2.5 3.5H9.5M2.5 5.5H8M2.5 7.5H5.5M2.5 9.5H4.5" stroke="#777"/><circle cx="10.5" cy="10.5" r="3.3" fill="#fff" stroke="#2f9a3a" stroke-width="1.8"/><path d="M13 13L16 16" stroke="#2f9a3a" stroke-width="2.2"/></svg>
<svg style="position:absolute;left:369px;top:9px;" width="6" height="3" viewBox="0 0 6 3"><path d="M0 0H6L3.0 3Z" fill="#222"/></svg>
<div style="position:absolute;left:382px;top:2px;width:1px;height:13px;background:#999"></div>
<div style="position:absolute;left:1245px;top:8px;width:11px;height:1px;background:#000"></div>
<svg style="position:absolute;left:1290px;top:2px;" width="11" height="11" viewBox="0 0 11 11"><path d="M0.5 2.5H8.5V10.5H0.5Z M2.5 2.5V0.5H10.5V8.5H8.5" fill="none" stroke="#000"/></svg>
<svg style="position:absolute;left:1335px;top:2px;" width="12" height="12" viewBox="0 0 12 12"><path d="M0.5 0.5L11.5 11.5M11.5 0.5L0.5 11.5" stroke="#000" stroke-width="1"/></svg>
<svg style="position:absolute;left:36px;top:57px;" width="20" height="21" viewBox="0 0 20 21"><path d="M1 20.5L9.5 0.5H10.5L19 20.5M4.2 14.2H15.8" fill="none" stroke="#3e8e35" stroke-width="2"/></svg>
<svg style="position:absolute;left:84px;top:52px;" width="17" height="18" viewBox="0 0 17 18"><path d="M0.5 4C2 1.5 3.5 1.5 5 4.5" fill="none" stroke="#4a78b0" stroke-width="1.1"/><circle cx="7.5" cy="5" r="2.5" fill="none" stroke="#4a78b0" stroke-width="1.1"/><circle cx="12.5" cy="4.5" r="2.7" fill="none" stroke="#4a78b0" stroke-width="1.1"/><rect x="8.5" y="10.5" width="7" height="6" fill="#fff" stroke="#666"/><path d="M10 12.5H14M10 14.5H14" stroke="#666"/></svg>
<svg style="position:absolute;left:88px;top:77px;" width="9" height="9" viewBox="0 0 9 9"><circle cx="4.3" cy="4" r="3.8" fill="#4a9040"/></svg>
<svg style="position:absolute;left:89px;top:100px;" width="9" height="9" viewBox="0 0 9 9"><path d="M0 0L8.5 4.5L0 9Z" fill="#4a9a3a"/></svg>
<svg style="position:absolute;left:264px;top:57px;" width="23" height="23" viewBox="0 0 23 23"><path d="M0 1L5.5 5.5V22L0 17.5Z" fill="#4a7db8"/><path d="M0.5 0.5H15.5L22 4.5H6Z" fill="#4a7db8"/><rect x="6.5" y="5.5" width="16" height="16.5" fill="#4a7db8"/></svg>
<svg style="position:absolute;left:336px;top:56px;" width="31" height="24" viewBox="0 0 31 24"><g fill="none" stroke="#4a7db8" stroke-width="1.1"><path d="M1 12L10.5 1.5H19.5L30 12L19.5 22.5H10.5Z"/><path d="M1 12H10.5L19.5 1.5M10.5 12L19.5 22.5M10.5 1.5L20 12H30M20 12L10.5 22.5" stroke-opacity="0.8"/></g></svg>
<div class="t" style="left:409.00px;top:54.04px;font-size:12px;color:#4a6e9e;">P</div>
<div class="t" style="left:416.50px;top:59.03px;font-size:9px;color:#4a6e9e;">i</div>
<div class="t" style="left:409.00px;top:76.04px;font-size:12px;color:#4a6e9e;">a=</div>
<div class="t" style="left:408.50px;top:98.04px;font-size:12px;color:#4a6e9e;letter-spacing:-0.5px">f(x)</div>
<svg style="position:absolute;left:517px;top:59px;" width="21" height="21" viewBox="0 0 21 21"><path d="M1 1L4 4V20L1 17Z" fill="#e05e3c"/><path d="M1 1H17L20 4H4Z" fill="#e05e3c"/><rect x="4" y="4" width="16" height="16" fill="#e05e3c"/><path d="M4 4H20M12 1.5V20M4 12H20M4 4L1 1M4 4V20" stroke="#f8d0c0" stroke-width="0.9" fill="none"/></svg>
<svg style="position:absolute;left:553px;top:54px;" width="18" height="14" viewBox="0 0 18 14"><path d="M13.5 4V0.5H0.5V12.5H13.5V9" fill="none" stroke="#6a6a6a"/><path d="M0.5 2.5H13.5M3.5 2.5V12.5" stroke="#6a6a6a" fill="none"/><path d="M6 7H15.5" stroke="#e05e3c" stroke-width="1.6"/><path d="M5.5 7L9 4V10Z" fill="#e05e3c"/></svg>
<svg style="position:absolute;left:553px;top:77px;" width="17" height="13" viewBox="0 0 17 13"><path d="M5 3.5H1.5V10H4.5M11 3.5H15V10H11.5" fill="none" stroke="#e05e3c" stroke-width="2"/><path d="M4.5 0.5L8.5 3.5L4.5 6.5Z M12 7L8 10L12 13Z" fill="#e05e3c"/></svg>
<svg style="position:absolute;left:656px;top:57px;" width="28" height="30" viewBox="0 0 28 30"><rect x="1" y="5" width="6" height="6" rx="1.3" fill="#f9a825"/><rect x="8" y="1" width="6" height="6" rx="1.3" fill="#f8aa1c"/><rect x="15" y="5" width="6" height="6" rx="1.3" fill="#f39020"/><rect x="1" y="12" width="6" height="6" rx="1.3" fill="#f39020"/><rect x="8" y="8" width="6" height="6" rx="1.3" fill="#f08c20"/><rect x="15" y="12" width="6" height="6" rx="1.3" fill="#d87818"/><rect x="8" y="15" width="6" height="6" rx="1.3" fill="#d87818"/><rect x="17.5" y="15" width="10" height="13" fill="#fcfdfe"/><rect x="19.5" y="16" width="3" height="7" fill="#3a4f66"/><path d="M16 22H26L21 27Z" fill="#3a4f66"/><rect x="16" y="27" width="11" height="1.5" fill="#3a4f66"/></svg>
<svg style="position:absolute;left:747px;top:58px;" width="26" height="23" viewBox="0 0 26 23"><g stroke="#4a7ac0" fill="#e6e2de"><rect x="7.5" y="0.5" width="11" height="4.5"/><rect x="7.5" y="14.5" width="11" height="4"/><rect x="10.5" y="18.5" width="5" height="3"/><rect x="1.5" y="5.5" width="23" height="9"/></g><rect x="2" y="9" width="22" height="1.5" fill="#a0b8d8"/><rect x="2" y="7" width="22" height="1" fill="#d0d8e4"/><rect x="2" y="11.5" width="22" height="1" fill="#d0d8e4"/></svg>
<svg style="position:absolute;left:824px;top:53px;" width="32" height="33" viewBox="0 0 32 33"><g fill="none" stroke="#5a7a90" stroke-width="0.9"><ellipse cx="13" cy="15" rx="4" ry="13.5"/><ellipse cx="13" cy="15" rx="4" ry="13.5" transform="rotate(60 13 15)"/><ellipse cx="13" cy="15" rx="4" ry="13.5" transform="rotate(-60 13 15)"/></g><circle cx="13" cy="15" r="2.2" fill="#1a6fc8"/><circle cx="4.5" cy="7" r="2" fill="#1a6fc8"/><circle cx="23.5" cy="11" r="2" fill="#1a6fc8"/><circle cx="8" cy="24" r="2" fill="#1a6fc8"/><rect x="19" y="19" width="13" height="14" fill="#fcfdfe"/><rect x="23.5" y="20" width="3" height="6" fill="#5a6570"/><path d="M20 25.5H30L25 30Z" fill="#5a6570"/><rect x="20" y="30.5" width="11" height="1.5" fill="#5a6570"/></svg>
<svg style="position:absolute;left:886px;top:59px;" width="21" height="21" viewBox="0 0 21 21"><path d="M1 1L4 4V20L1 17Z" fill="#34495e"/><path d="M1 1H17L20 4H4Z" fill="#34495e"/><rect x="4" y="4" width="16" height="16" fill="#34495e"/><path d="M4 4H20M12 1.5V20M4 12H20M4 4L1 1M4 4V20" stroke="#a8b8c8" stroke-width="0.9" fill="none"/></svg>
<svg style="position:absolute;left:925px;top:54px;" width="32" height="29" viewBox="0 0 32 29"><path d="M15.5 1L30.5 27.5H0.5Z" fill="#ebebeb" stroke="#4a5a68" stroke-width="1.3"/><g stroke="#4a5a68" stroke-width="0.6"><path d="M12.50 6.30H18.50"/><path d="M9.50 11.60H21.50"/><path d="M6.50 16.90H24.50"/><path d="M3.50 22.20H27.50"/><path d="M6.50 27.5L18.50 6.30"/><path d="M24.50 27.5L12.50 6.30"/><path d="M12.50 27.5L21.50 11.60"/><path d="M18.50 27.5L9.50 11.60"/><path d="M18.50 27.5L24.50 16.90"/><path d="M12.50 27.5L6.50 16.90"/><path d="M24.50 27.5L27.50 22.20"/><path d="M6.50 27.5L3.50 22.20"/></g></svg>
<svg style="position:absolute;left:983px;top:57px;" width="10" height="8" viewBox="0 0 10 8"><rect x="0.5" y="0.8" width="9" height="2.4" fill="#1a7fa8"/><rect x="0.5" y="4.6" width="9" height="2.4" fill="#1a7fa8"/></svg>
<svg style="position:absolute;left:980px;top:78px;" width="17" height="9" viewBox="0 0 17 9"><g fill="none" stroke="#2a8ca0" stroke-width="1.1"><path d="M0.5 3.5C2 1 3.5 1 5.5 4.5"/><circle cx="8" cy="5" r="2.5"/><circle cx="13" cy="4.7" r="2.8"/></g></svg>
<svg style="position:absolute;left:980px;top:97px;" width="17" height="9" viewBox="0 0 17 9"><g fill="none" stroke="#2a8ca0" stroke-width="1.1"><path d="M0.5 3.5C2 1 3.5 1 5.5 4.5"/><circle cx="8" cy="5" r="2.5"/><circle cx="13" cy="4.7" r="2.8"/></g></svg>
<svg style="position:absolute;left:988px;top:105px;" width="9" height="9" viewBox="0 0 9 9"><rect x="3.5" y="0" width="1.5" height="5" fill="#5a6570"/><path d="M1 4H7.5L4.25 7Z" fill="#5a6570"/><rect x="1" y="7.5" width="7" height="1.2" fill="#5a6570"/></svg>
<svg style="position:absolute;left:1075px;top:53px;" width="17" height="16" viewBox="0 0 17 16"><path d="M0.5 1.5L5.5 5V15L0.5 11.5Z" fill="#b0206a"/><path d="M1 1H11.5L16 4.5H6Z" fill="#b0206a"/><rect x="6" y="5" width="10" height="10.5" fill="#b0206a"/></svg>
<svg style="position:absolute;left:1075px;top:75px;" width="17" height="16" viewBox="0 0 17 16"><g fill="#fff" stroke="#777"><rect x="2.5" y="0.5" width="8.5" height="9"/><rect x="4.5" y="2.5" width="8.5" height="9"/><rect x="6.5" y="4.5" width="9" height="9"/><path d="M0.5 9.5V12.5L3 15H16V13.5H6.5L2.5 10Z"/></g><rect x="8" y="6" width="6" height="6" fill="#b0206a"/></svg>
<svg style="position:absolute;left:1205px;top:54px;" width="17" height="15" viewBox="0 0 17 15"><g fill="none" stroke="#3d5570"><path d="M2.5 10.5H0.5V0.5H13.5V4"/><rect x="5.5" y="5.5" width="10.5" height="8.5" fill="#fcfdfe"/></g><rect x="1.5" y="1.5" width="11" height="1.5" fill="#b0c8e0"/><rect x="6.5" y="6.5" width="9" height="1.5" fill="#b0c8e0"/></svg>
<svg style="position:absolute;left:1205px;top:75px;" width="17" height="16" viewBox="0 0 17 16"><g fill="none" stroke="#3d5570"><path d="M5 10.5H0.5V0.5H13.5V5"/></g><rect x="1.5" y="1.5" width="11" height="1.5" fill="#b8c4cc"/><path d="M15 10A4.3 4.3 0 1 1 13 6.5" fill="none" stroke="#3d5570" stroke-width="1.3"/><path d="M12 5L16.5 8.5L12 10Z" fill="#3d5570"/></svg>
<svg style="position:absolute;left:252.5px;top:157px;" width="7" height="4.5" viewBox="0 0 7 4.5"><path d="M0 0H7L3.5 4.5Z" fill="#333"/></svg>
<svg style="position:absolute;left:266px;top:154px;" width="9" height="12" viewBox="0 0 9 12"><rect x="1.5" y="0" width="6" height="7" fill="#4a4a4a"/><rect x="0" y="7" width="9" height="1.2" fill="#4a4a4a"/><rect x="4" y="8" width="1.2" height="4" fill="#4a4a4a"/></svg>
<svg style="position:absolute;left:11px;top:179px;" width="15" height="9" viewBox="0 0 15 9"><path d="M0 4.5L5 0V9Z" fill="#4a7ab8"/><rect x="4" y="3" width="10.5" height="3" fill="#4a7ab8"/></svg>
<svg style="position:absolute;left:35px;top:179px;" width="15" height="9" viewBox="0 0 15 9"><path d="M14.5 4.5L9.5 0V9Z" fill="#b4b4b4"/><rect x="0" y="3" width="10.5" height="3" fill="#b4b4b4"/></svg>
<svg style="position:absolute;left:62px;top:177px;" width="9" height="14" viewBox="0 0 9 14"><path d="M4.5 0L9 5H0Z" fill="#b4b4b4"/><rect x="3" y="4" width="3" height="10" fill="#b4b4b4"/></svg>
<svg style="position:absolute;left:86px;top:177px;" width="9" height="14" viewBox="0 0 9 14"><path d="M4.5 14L9 9H0Z" fill="#b4b4b4"/><rect x="3" y="0" width="3" height="10" fill="#b4b4b4"/></svg>
<svg style="position:absolute;left:107px;top:177px;" width="14" height="13" viewBox="0 0 14 13"><rect x="0" y="1" width="2" height="2" fill="#2a4f80"/><rect x="3" y="1" width="11" height="2" fill="#2a4f80"/><path d="M1 8.5Q7 3 13 8.5Q7 14 1 8.5Z" fill="#2a4f80"/><ellipse cx="7" cy="8.5" rx="3" ry="2" fill="#fff"/><circle cx="7" cy="8.5" r="1.5" fill="#2a4f80"/></svg>
<svg style="position:absolute;left:128.5px;top:181.5px;" width="7.5" height="4.5" viewBox="0 0 7.5 4.5"><path d="M0 0H7.5L3.75 4.5Z" fill="#111"/></svg>
<svg style="position:absolute;left:148px;top:178px;" width="17" height="13" viewBox="0 0 17 13"><path d="M0 1.0H1.5" stroke="#2a4f80"/><path d="M3 1.0H11" stroke="#2a4f80"/><path d="M0 3.0H1.5" stroke="#2a4f80"/><path d="M3 3.0H11" stroke="#aaa"/><path d="M0 5.0H1.5" stroke="#2a4f80"/><path d="M3 5.0H11" stroke="#aaa"/><path d="M0 7.0H1.5" stroke="#2a4f80"/><path d="M3 7.0H11" stroke="#aaa"/><path d="M0 9.0H1.5" stroke="#2a4f80"/><path d="M3 9.0H11" stroke="#aaa"/><path d="M0 11.0H1.5" stroke="#2a4f80"/><path d="M3 11.0H11" stroke="#aaa"/><path d="M13.5 12V2" stroke="#2a4f80" stroke-width="1.5"/><path d="M13.5 0L16.5 4H10.5Z" fill="#2a4f80"/></svg>
<svg style="position:absolute;left:172px;top:178px;" width="17" height="13" viewBox="0 0 17 13"><path d="M0 1.0H1.5" stroke="#2a4f80"/><path d="M3 1.0H11" stroke="#2a4f80"/><path d="M0 3.0H1.5" stroke="#2a4f80"/><path d="M3 3.0H11" stroke="#aaa"/><path d="M0 5.0H1.5" stroke="#2a4f80"/><path d="M3 5.0H11" stroke="#aaa"/><path d="M0 7.0H1.5" stroke="#2a4f80"/><path d="M3 7.0H11" stroke="#aaa"/><path d="M0 9.0H1.5" stroke="#2a4f80"/><path d="M3 9.0H11" stroke="#aaa"/><path d="M0 11.0H1.5" stroke="#2a4f80"/><path d="M3 11.0H11" stroke="#aaa"/><path d="M0 0.5H11" stroke="#2a4f80"/><path d="M0 2.5H11M0 4.5H11M0 6.5H11M0 8.5H11M0 10.5H11" stroke="#2a4f80"/><path d="M13.5 0V10" stroke="#2a4f80" stroke-width="1.5"/><path d="M13.5 12L16.5 8H10.5Z" fill="#2a4f80"/></svg>
<svg style="position:absolute;left:198px;top:178px;" width="12" height="13" viewBox="0 0 12 13"><path d="M0 0.5H7" stroke="#aaa"/><path d="M8 0.5H11" stroke="#2a4f80"/><path d="M0 2.5H7" stroke="#aaa"/><path d="M8 2.5H11" stroke="#2a4f80"/><path d="M0 4.5H7" stroke="#aaa"/><path d="M8 4.5H11" stroke="#2a4f80"/><path d="M0 6.5H7" stroke="#aaa"/><path d="M8 6.5H11" stroke="#2a4f80"/><path d="M0 8.5H7" stroke="#aaa"/><path d="M8 8.5H11" stroke="#2a4f80"/><path d="M0 10.5H7" stroke="#aaa"/><path d="M8 10.5H11" stroke="#2a4f80"/><path d="M0 12.5H7" stroke="#aaa"/><path d="M8 12.5H11" stroke="#2a4f80"/></svg>
<svg style="position:absolute;left:218.5px;top:182px;" width="7.5" height="4.5" viewBox="0 0 7.5 4.5"><path d="M0 0H7.5L3.75 4.5Z" fill="#111"/></svg>
<svg style="position:absolute;left:261px;top:204.5px;" width="8" height="4" viewBox="0 0 8 4"><path d="M0 4L4 0L8 4" fill="none" stroke="#888" stroke-width="1.1"/></svg>
<svg style="position:absolute;left:261px;top:668.5px;" width="8" height="4" viewBox="0 0 8 4"><path d="M0 0L4 4L8 0" fill="none" stroke="#888" stroke-width="1.1"/></svg>
<svg style="position:absolute;left:15px;top:684.5px;" width="4" height="8" viewBox="0 0 4 8"><path d="M4 0L0 4L4 8" fill="none" stroke="#888" stroke-width="1.1"/></svg>
<svg style="position:absolute;left:245px;top:684.5px;" width="4" height="8" viewBox="0 0 4 8"><path d="M0 0L4 4L0 8" fill="none" stroke="#888" stroke-width="1.1"/></svg>
<svg style="position:absolute;left:536px;top:227px;" width="8" height="4" viewBox="0 0 8 4"><path d="M0 4L4 0L8 4" fill="none" stroke="#888" stroke-width="1.1"/></svg>
<svg style="position:absolute;left:536.5px;top:695.5px;" width="7.0" height="3.5" viewBox="0 0 7.0 3.5"><path d="M0 0L3.5 3.5L7.0 0" fill="none" stroke="#888" stroke-width="1.1"/></svg>
<svg style="position:absolute;left:522px;top:158.5px;" width="8" height="5" viewBox="0 0 8 5"><path d="M0 0H8L4.0 5Z" fill="#b8c2cc"/></svg>
<svg style="position:absolute;left:536.5px;top:155.5px;" width="8" height="12" viewBox="0 0 8 12"><rect x="1.5" y="0" width="5" height="6.5" fill="#b8c2cc"/><rect x="0" y="6.5" width="8" height="1.3" fill="#b8c2cc"/><rect x="3.4" y="7.5" width="1.2" height="4" fill="#b8c2cc"/></svg>
<svg style="position:absolute;left:1321px;top:158.5px;" width="8" height="5" viewBox="0 0 8 5"><path d="M0 0H8L4.0 5Z" fill="#b8c2cc"/></svg>
<svg style="position:absolute;left:1335.5px;top:155.5px;" width="8" height="12" viewBox="0 0 8 12"><rect x="1.5" y="0" width="5" height="6.5" fill="#b8c2cc"/><rect x="0" y="6.5" width="8" height="1.3" fill="#b8c2cc"/><rect x="3.4" y="7.5" width="1.2" height="4" fill="#b8c2cc"/></svg>
<svg style="position:absolute;left:1349.5px;top:156.5px;" width="9" height="9" viewBox="0 0 9 9"><path d="M0.5 0.5L8.5 8.5M8.5 0.5L0.5 8.5" stroke="#b8c2cc" stroke-width="1.3"/></svg>
<svg style="position:absolute;left:1321px;top:666.5px;" width="8" height="5" viewBox="0 0 8 5"><path d="M0 0H8L4.0 5Z" fill="#b8c2cc"/></svg>
<svg style="position:absolute;left:1335.5px;top:663.5px;" width="8" height="12" viewBox="0 0 8 12"><rect x="1.5" y="0" width="5" height="6.5" fill="#b8c2cc"/><rect x="0" y="6.5" width="8" height="1.3" fill="#b8c2cc"/><rect x="3.4" y="7.5" width="1.2" height="4" fill="#b8c2cc"/></svg>
<svg style="position:absolute;left:1349.5px;top:664.5px;" width="9" height="9" viewBox="0 0 9 9"><path d="M0.5 0.5L8.5 8.5M8.5 0.5L0.5 8.5" stroke="#b8c2cc" stroke-width="1.3"/></svg>
<svg style="position:absolute;left:294px;top:201px;" width="12" height="15" viewBox="0 0 12 15"><rect x="0" y="0" width="9" height="2" rx="0.5" fill="#0a7aa8"/><rect x="0" y="3.2" width="9" height="2" rx="0.5" fill="#0a7aa8"/><path d="M1.5 6.5V10H5" fill="none" stroke="#3a6aa8" stroke-width="1.2"/><path d="M5 8L7 10L5 12Z" fill="#3a6aa8"/><path d="M7.5 7.5H11.5M7.5 11.5H11.5M7.5 13.5H11.5" stroke="#aaa" stroke-width="0.9"/><path d="M7.5 9.5H11.5" stroke="#3a6aa8" stroke-width="0.9"/></svg>
<svg style="position:absolute;left:433px;top:205.5px;" width="10" height="7" viewBox="0 0 10 7"><rect x="0.5" y="0.5" width="9" height="2.2" fill="#1a84b0"/><rect x="0.5" y="4.2" width="9" height="2.2" fill="#1a84b0"/></svg>
<svg style="position:absolute;left:556px;top:174px;" width="100" height="24" viewBox="0 0 100 24"><circle cx="11.5" cy="10.5" r="4.6" fill="none" stroke="#2a4f80" stroke-width="1.6"/><path d="M14.8 13.8L18.5 17.5" stroke="#2a4f80" stroke-width="2"/><path d="M9.0 10.5H14.0" stroke="#2a4f80" stroke-width="1.2"/><path d="M11.5 8.0V13.0" stroke="#2a4f80" stroke-width="1.2"/><circle cx="36" cy="10.5" r="4.6" fill="none" stroke="#2a4f80" stroke-width="1.6"/><path d="M39.3 13.8L43 17.5" stroke="#2a4f80" stroke-width="2"/><path d="M33.5 10.5H38.5" stroke="#2a4f80" stroke-width="1.2"/><rect x="53.5" y="10.5" width="8.5" height="7" fill="none" stroke="#2a4f80" stroke-dasharray="2 1.3"/><circle cx="61.5" cy="10.5" r="4.6" fill="none" stroke="#2a4f80" stroke-width="1.6"/><path d="M64.8 13.8L68.5 17.5" stroke="#2a4f80" stroke-width="2"/><path d="M59.0 10.5H64.0" stroke="#2a4f80" stroke-width="1.2"/><path d="M61.5 8.0V13.0" stroke="#2a4f80" stroke-width="1.2"/><rect x="77.5" y="4.5" width="14" height="14" fill="none" stroke="#555" stroke-width="1.1"/><path d="M84.5 8.5V14.5M81.5 11.5H87.5" stroke="#555" stroke-width="1.2"/><path d="M82 8L84.5 5.2L87 8Z M82 15L84.5 17.8L87 15Z M81 9L78.2 11.5L81 14Z M88 9L90.8 11.5L88 14Z" fill="#4a90d0"/></svg>
<div style="position:absolute;left:659px;top:178px;width:1px;height:16px;background:#d0d0d0"></div>
<svg style="position:absolute;left:673px;top:178px;" width="42" height="16" viewBox="0 0 42 16"><path d="M2.5 0V14.5H16" stroke="#555" fill="none"/><path d="M0.5 1V15M0.5 15.5H16" stroke="#555" stroke-dasharray="1 2" fill="none"/><path d="M3 4.5H16M3 8.5H16M3 12H16" stroke="#ddd"/><path d="M6.5 0.5V14M12 0.5V14M15 0.5V14" stroke="#4a7ab8" stroke-width="1.1"/><path d="M26.5 0V14.5H40" stroke="#555" fill="none"/><path d="M24.5 1V15M24.5 15.5H40" stroke="#555" stroke-dasharray="1 2" fill="none"/><path d="M30.5 1V14M34.5 1V14M38 1V14" stroke="#ddd"/><path d="M27 1.5H40M27 4.5H40M27 7.5H40M27 11.5H40" stroke="#4a7ab8" stroke-width="1.1"/></svg>
<div style="position:absolute;left:723px;top:178px;width:1px;height:16px;background:#d0d0d0"></div>
<svg style="position:absolute;left:740px;top:179px;" width="11" height="13" viewBox="0 0 11 13"><path d="M2.5 6V4A3 3 0 0 1 8.5 4V6" fill="none" stroke="#4a7ab8" stroke-width="1.8"/><rect x="0" y="5.5" width="11" height="7.5" rx="0.5" fill="#4a7ab8"/></svg>
<div style="position:absolute;left:763px;top:178px;width:1px;height:16px;background:#d0d0d0"></div>
<svg style="position:absolute;left:777px;top:180px;" width="16" height="12" viewBox="0 0 16 12"><path d="M0 2.5H4L5.5 0.5H10.5L12 2.5H16V12H0Z" fill="#4a7ab8"/><circle cx="8" cy="7" r="3.3" fill="#4a7ab8" stroke="#fff" stroke-width="1.1"/><rect x="1.5" y="3.5" width="1.5" height="1.5" fill="#fff"/></svg>
<svg style="position:absolute;left:802px;top:178px;" width="14" height="16" viewBox="0 0 14 16"><rect x="2.5" y="0.5" width="9" height="5" fill="#fff" stroke="#4a7ab8"/><rect x="0" y="5" width="14" height="7" rx="1" fill="#4a7ab8"/><rect x="2.5" y="11" width="9" height="4.5" fill="#fff" stroke="#4a7ab8"/><rect x="9.5" y="8" width="1.3" height="1.3" fill="#fff"/><rect x="11.5" y="8" width="1.3" height="1.3" fill="#fff"/></svg>
<svg style="position:absolute;left:1337px;top:201px;" width="24" height="22" viewBox="0 0 24 22"><ellipse cx="12" cy="11" rx="11" ry="10" fill="#eaeaec"/><rect x="5" y="5" width="14" height="11" rx="3" fill="#1a4fb8"/><path d="M8 6.5L15 10.5L8 14.5Z" fill="#f0e040"/><rect x="15" y="7" width="3" height="7" fill="#40a8f0"/></svg>
<svg style="position:absolute;left:563px;top:685px;" width="13" height="17" viewBox="0 0 13 17"><path d="M1 0L5 8" stroke="#555" stroke-width="1.3"/><path d="M3.5 7.5L7 6L12 14.5L6 16.5Z" fill="#e8c8a0"/><path d="M3.8 8.5L6.8 7.2" stroke="#d05040" stroke-width="1"/></svg>
<svg style="position:absolute;left:10px;top:745px;" width="17" height="16" viewBox="0 0 17 16"><path d="M0 2.3L6.8 1.3V7.3H0Z M7.8 1.2L16.3 0V7.3H7.8Z M0 8.3H6.8V14.3L0 13.3Z M7.8 8.3H16.3V15.6L7.8 14.4Z" fill="#fff"/></svg>
<svg style="position:absolute;left:46px;top:745px;" width="16" height="16" viewBox="0 0 16 16"><circle cx="7.8" cy="7.8" r="6.6" fill="none" stroke="#fff" stroke-width="1.8"/></svg>
<svg style="position:absolute;left:80px;top:746px;" width="21" height="14" viewBox="0 0 21 14"><rect x="4.5" y="0.5" width="12" height="13" fill="none" stroke="#fff"/><path d="M2.5 2.5H0.5V11.5H2.5M18.5 2.5H20.5V11.5H18.5" fill="none" stroke="#fff"/></svg>
<svg style="position:absolute;left:120px;top:746px;" width="17" height="15" viewBox="0 0 17 15"><path d="M0 1H6L7.5 2.5H16V14H0Z" fill="#f4c84a"/><path d="M0 4H16V14H0Z" fill="#fbe07a"/><path d="M4 8H12V14H10V10H6V14H4Z" fill="#1ea0e8"/><rect x="6" y="10" width="4" height="4" fill="#5fd0f8"/></svg>
<svg style="position:absolute;left:157px;top:745px;" width="16" height="16" viewBox="0 0 16 16"><defs><radialGradient id="ffg" cx="0.6" cy="0.35" r="0.6"><stop offset="0" stop-color="#50b8f0"/><stop offset="1" stop-color="#1a4aa8"/></radialGradient><linearGradient id="ffo" x1="0" y1="0" x2="1" y2="1"><stop offset="0" stop-color="#f08a20"/><stop offset="1" stop-color="#e04a20"/></linearGradient></defs><circle cx="8" cy="8" r="7.2" fill="url(#ffo)"/><circle cx="8.8" cy="6.5" r="5" fill="url(#ffg)"/><path d="M14.8 6C15.5 9 14 13 10 14.5C13 12 13.5 9 12.5 6.5Z" fill="#f8d030"/><path d="M1.5 3.5L3.5 5.5L3 8C3.5 11 6 12.5 9 12C7 13.5 3 13 1.5 10C0.8 8 0.9 5.5 1.5 3.5Z" fill="#f07020"/><path d="M4 4L6.5 5.5L5 7Z" fill="#f8a030"/></svg>
<svg style="position:absolute;left:193px;top:745px;" width="18" height="17" viewBox="0 0 18 17"><path d="M1 1.5Q9 -0.5 17 1V12.5L9 16.5L1 13Z" fill="#f0f0f0"/><rect x="3.5" y="3" width="12" height="9.5" rx="2.5" fill="#1a40b8"/><path d="M5.5 4.5L12 7.8L5.5 11Z" fill="#f8e040"/><path d="M12 5L15 6V10L12 11Z" fill="#40a8f0"/></svg>
<svg style="position:absolute;left:1201px;top:749px;" width="13" height="8" viewBox="0 0 13 8"><path d="M0.5 7L6.5 1L12.5 7" fill="none" stroke="#fff" stroke-width="1.2"/></svg>
<svg style="position:absolute;left:1223px;top:746px;" width="17" height="14" viewBox="0 0 17 14"><rect x="3.5" y="2.5" width="13" height="8" fill="none" stroke="#fff"/><rect x="0.5" y="0.5" width="5" height="5" fill="#03050a" stroke="#fff"/><path d="M1.5 2.5L3 4L4.5 1.5" stroke="#fff" fill="none" stroke-width="0.7"/><path d="M3 5.5V13.5M7 13.5H13M10 10.5V13.5" stroke="#fff"/></svg>
<svg style="position:absolute;left:1247px;top:747px;" width="17" height="12" viewBox="0 0 17 12"><path d="M0.5 4H3L7 0.5V11.5L3 8H0.5Z" fill="none" stroke="#fff"/><path d="M9.5 3.5Q11 6 9.5 8.5M12 2Q14.3 6 12 10M14.5 0.5Q17.5 6 14.5 11.5" fill="none" stroke="#fff" stroke-width="0.9"/></svg>
<svg style="position:absolute;left:1271px;top:745px;" width="17" height="16" viewBox="0 0 17 16"><path d="M0 0H16V12H9.5L8 15L6.5 12H0Z" fill="#fff"/><path d="M3 3H13M3 5.5H13M3 8H10" stroke="#03050a" stroke-width="1.1"/></svg>
<div class="t" style="left:1301.60px;top:745.94px;font-size:12px;color:#fff;transform:scaleX(0.9467);transform-origin:0 0;">12:56 AM</div>
<div style="position:absolute;left:1362px;top:738px;width:1px;height:30px;background:#555"></div>
<div style="position:absolute;left:1124px;top:726px;width:1px;height:1px;background:#888"></div>
<div style="position:absolute;left:93px;top:199px;width:2px;height:1px;background:#333"></div>
</body></html>
